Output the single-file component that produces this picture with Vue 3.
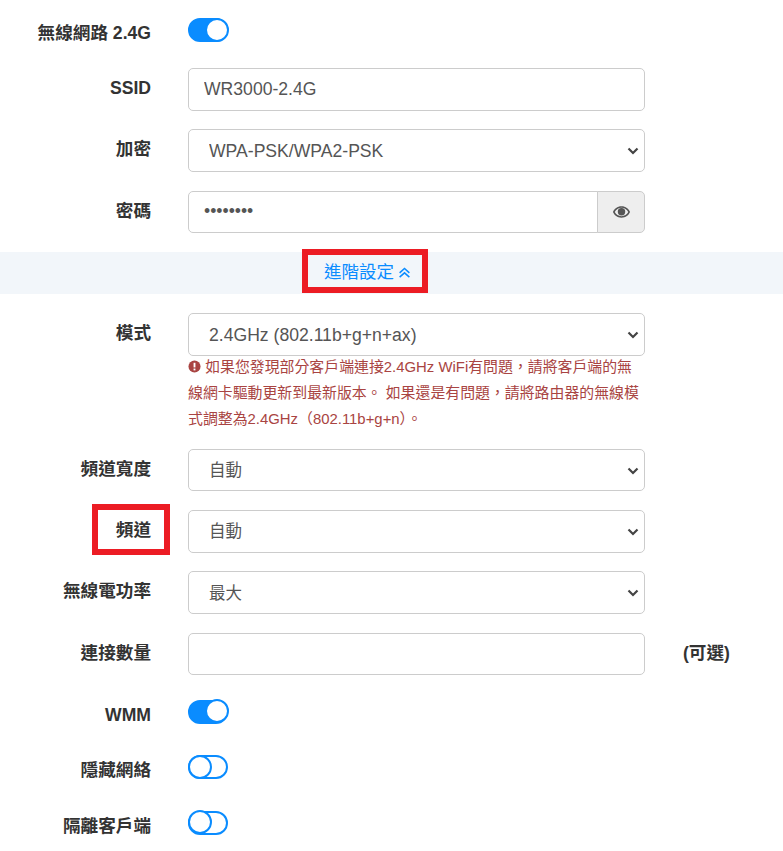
<template>
  <form class="page" @submit.prevent>
    <div class="row row-switch first">
      <span class="lbl">無線網路 2.4G</span>
      <button type="button" class="sw" :class="{ on: form.enabled }" @click="form.enabled = !form.enabled"><i></i></button>
    </div>

    <div class="row">
      <label class="lbl">SSID</label>
      <input v-model="form.ssid" class="ctl" type="text" />
    </div>

    <div class="row">
      <label class="lbl">加密</label>
      <div class="sel">
        <select v-model="form.enc" class="ctl sel-input wide-pad">
          <option>WPA-PSK/WPA2-PSK</option>
        </select>
        <svg class="caret" viewBox="0 0 12 8"><path d="M1.500 1.500 6 6l4.500-4.500" /></svg>
      </div>
    </div>

    <div class="row">
      <label class="lbl">密碼</label>
      <div class="pw">
        <input v-model="form.pass" class="ctl pw-input" type="password" />
        <span class="pw-eye">
          <svg viewBox="0 0 20 14" width="19" height="14">
            <path d="M10 1C5.600 1 2.400 3.800 1 7c1.400 3.200 4.600 6 9 6s7.600-2.800 9-6c-1.400-3.200-4.600-6-9-6Zm0 10.400C6.800 11.400 4.300 9.500 2.900 7 4.300 4.500 6.800 2.600 10 2.600s5.700 1.900 7.100 4.400c-1.400 2.500-3.900 4.400-7.100 4.400Z" />
            <circle cx="10" cy="6.800" r="3.900" />
          </svg>
        </span>
      </div>
    </div>

    <div class="band">
      <a class="more mark">進階設定
        <svg viewBox="0 0 12 12" width="13" height="13"><path d="M1.500 6.300 6 2.300l4.500 4M1.500 10.300 6 6.300l4.500 4" /></svg>
      </a>
    </div>

    <div class="row mode">
      <label class="lbl">模式</label>
      <div class="stack">
        <div class="sel">
          <select v-model="form.mode" class="ctl sel-input wide-pad">
            <option>2.4GHz (802.11b+g+n+ax)</option>
          </select>
          <svg class="caret" viewBox="0 0 12 8"><path d="M1.500 1.500 6 6l4.500-4.500" /></svg>
        </div>
        <p class="hint">
          <svg viewBox="0 0 14 14" width="13" height="13"><circle cx="7" cy="7" r="6.500" /><rect class="cut" x="6" y="3" width="2" height="5" /><rect class="cut" x="6" y="9.200" width="2" height="2" /></svg>
          如果您發現部分客戶端連接2.4GHz WiFi有問題，請將客戶端的無<br />線網卡驅動更新到最新版本。 如果還是有問題，請將路由器的無線模<br />式調整為2.4GHz（802.11b+g+n）。
        </p>
      </div>
    </div>

    <div v-for="s in selects" :key="s.label" class="row tight">
      <label class="lbl" :class="{ 'lbl-mark': s.mark }">{{ s.label }}</label>
      <div class="sel">
        <select class="ctl sel-input">
          <option>{{ s.value }}</option>
        </select>
        <svg class="caret" viewBox="0 0 12 8"><path d="M1.500 1.500 6 6l4.500-4.500" /></svg>
      </div>
    </div>

    <div class="row tight">
      <label class="lbl">連接數量</label>
      <input v-model="form.clients" class="ctl" type="text" />
      <span class="opt">(可選)</span>
    </div>

    <div v-for="t in toggles" :key="t.label" class="row row-switch">
      <span class="lbl">{{ t.label }}</span>
      <button type="button" class="sw" :class="{ on: t.on }" @click="t.on = !t.on"><i></i></button>
    </div>
  </form>
</template>

<script setup>
import { reactive } from 'vue'

const form = reactive({
  enabled: true,
  ssid: 'WR3000-2.4G',
  enc: 'WPA-PSK/WPA2-PSK',
  pass: '12345678',
  mode: '2.4GHz (802.11b+g+n+ax)',
  clients: '',
})

const selects = [
  { label: '頻道寬度', value: '自動' },
  { label: '頻道', value: '自動', mark: true },
  { label: '無線電功率', value: '最大' },
]

const toggles = reactive([
  { label: 'WMM', on: true },
  { label: '隱藏網絡', on: false },
  { label: '隔離客戶端', on: false },
])
</script>

<style>
html, body { background: #fff; }
</style>

<style scoped>
.page {
  width: 783px;
  height: 851px;
  overflow: hidden;
  font-family: "Liberation Sans", "Noto Sans CJK TC", sans-serif;
  color: #333;
  font-size: 16px;
}

.row {
  display: grid;
  grid-template-columns: 151px 457px auto;
  column-gap: 37px;
  align-items: start;
  margin-top: 18.670px;
}
.row.first { margin-top: 18px; }
.row.tight { margin-top: 18.670px; }
.row.mode { margin-top: 19px; }

.row-switch { margin-top: 29.500px; }
.row-switch.first + .row { margin-top: 24px; }
.row.tight + .row-switch { margin-top: 24.500px; }
.row.mode + .row.tight { margin-top: 16.670px; }

.lbl {
  display: block;
  text-align: right;
  font-weight: 700;
  font-size: 17.600px;
  line-height: 24px;
  padding-top: 8px;
  white-space: nowrap;
}
.row-switch .lbl {
  height: 26px;
  box-sizing: border-box;
  padding-top: 3px;
}

.ctl {
  display: block;
  width: 100%;
  height: 42.670px;
  box-sizing: border-box;
  padding: 0 15px;
  border: 1px solid #ccc;
  border-radius: 5px;
  background: #fff;
  color: #555;
  font: inherit;
  font-size: 17.600px;
  outline: none;
}

.sel { position: relative; }
.sel-input {
  appearance: none;
  font-size: 16.500px;
  padding-left: 20px;
}
.wide-pad { font-size: 17.600px; }
.caret {
  position: absolute;
  right: 6px;
  top: 18px;
  width: 12px;
  height: 8px;
  fill: none;
  stroke: #444;
  stroke-width: 2.200px;
  pointer-events: none;
}

.pw { display: flex; }
.pw-input {
  flex: 1;
  min-width: 0;
  border-radius: 5px 0 0 5px;
}
.pw-eye {
  width: 48px;
  box-sizing: border-box;
  display: flex;
  align-items: center;
  justify-content: center;
  background: #eee;
  border: 1px solid #ccc;
  border-left: 1px solid #ccc;
  border-radius: 0 5px 5px 0;
  margin-left: -1px;
}
.pw-eye svg { fill: #555; }

.band {
  display: flex;
  justify-content: center;
  align-items: center;
  height: 42px;
  margin-top: 19px;
  padding-right: 48px;
  background: #f2f6fa;
}
.more {
  display: flex;
  align-items: center;
  gap: 4px;
  color: #0a8cff;
  font-size: 17.500px;
  line-height: 24px;
  margin-top: -2px;
}
.more svg {
  fill: none;
  stroke: currentColor;
  stroke-width: 1.400px;
}
.mark { position: relative; }
.mark::after {
  content: "";
  position: absolute;
  left: -22px;
  right: -17px;
  top: -11.500px;
  bottom: -9px;
  border: 6px solid #ec1c24;
}

.hint {
  margin: -2px 0 0;
  color: #a94442;
  font-size: 14.900px;
  line-height: 26px;
  white-space: nowrap;
}
.hint svg {
  fill: #a94442;
  vertical-align: -1px;
}
.hint .cut { fill: #fff; }
.stack { min-width: 0; }

.lbl-mark { position: relative; }
.lbl-mark::after {
  content: "";
  position: absolute;
  left: 91.500px;
  width: 78.500px;
  top: -6px;
  height: 51px;
  box-sizing: border-box;
  border: 6px solid #ec1c24;
}

.opt {
  font-weight: 700;
  font-size: 17.600px;
  line-height: 24px;
  padding: 8px 0 0 1px;
  white-space: nowrap;
}

.sw {
  position: relative;
  display: block;
  width: 40px;
  height: 24px;
  padding: 0;
  box-sizing: border-box;
  border: 2.500px solid #0a8cff;
  border-radius: 12px;
  background: #fff;
  cursor: pointer;
}
.sw i {
  position: absolute;
  left: -2.500px;
  top: -2.500px;
  width: 24px;
  height: 24px;
  box-sizing: border-box;
  border: 2.500px solid #0a8cff;
  border-radius: 50%;
  background: #fff;
}
.sw.on { background: #0a8cff; }
.sw.on i { left: auto; right: -2.500px; }
</style>
